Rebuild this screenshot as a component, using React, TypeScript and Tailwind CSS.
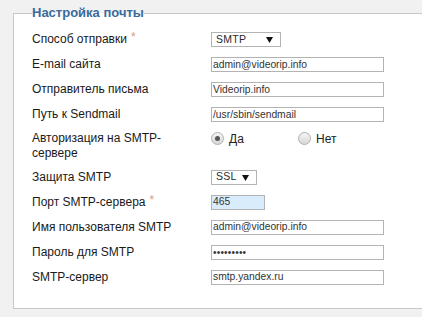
import React from "react";

const font = { fontFamily: '"Liberation Sans", Arial, sans-serif' };

function Tri() {
  return (
    <svg width="7" height="7" viewBox="0 0 7 7" className="shrink-0">
      <polygon points="0,1 7,1 3.5,7" fill="#111" />
    </svg>
  );
}

function Sel({ text, w }: { text: string; w: string }) {
  return (
    <div
      className={`${w} h-[15px] border border-[#b3b3b3] bg-white flex items-center justify-between pl-[4px] pr-[7px] text-[10.5px] text-[#2a2a2a] tracking-[0.3px]`}
    >
      <span>{text}</span>
      <Tri />
    </div>
  );
}

function Inp({ value, w = "w-[173px]", bg = "bg-white" }: { value: string; w?: string; bg?: string }) {
  return (
    <div
      className={`${w} h-[15px] border border-[#b3b3b3] ${bg} flex items-center pl-[1px] text-[10.3px] text-[#333] overflow-hidden whitespace-nowrap`}
    >
      {value}
    </div>
  );
}

function Star() {
  return <span className="text-[#dc9a80] ml-[4px] relative top-[-2px]">*</span>;
}

function Radio({ checked, label }: { checked?: boolean; label: string }) {
  return (
    <div className="flex items-center gap-[5px]">
      <div className="w-[13px] h-[13px] rounded-full border border-[#b0b0b0] bg-gradient-to-b from-[#f4f4f4] to-[#d8d8d8] flex items-center justify-center">
        {checked && <div className="w-[5px] h-[5px] rounded-full bg-[#555]" />}
      </div>
      <span className="text-[12px] text-[#222]">{label}</span>
    </div>
  );
}

function Row({ label, children, h = "h-[25px]" }: { label: React.ReactNode; children: React.ReactNode; h?: string }) {
  return (
    <div className={`grid grid-cols-[179px_1fr] ${h} items-center`}>
      <div className="text-[12px] text-[#1a1a1a] leading-[15px]">{label}</div>
      <div className="flex items-center">{children}</div>
    </div>
  );
}

export default function App() {
  return (
    <div className="w-[422px] h-[317px] bg-[#f1f1f1] overflow-hidden pl-[13px] pt-[5px]" style={font}>
      <fieldset className="w-[440px] h-[304px] border border-[#c8c8c8] bg-white pl-[18px] pt-[6px]">
        <legend className="px-0 text-[13px] leading-[16px] font-bold text-[#3a6b9c]">Настройка почты</legend>
        <Row label={<>Способ отправки<Star /></>}>
          <Sel text="SMTP" w="w-[70px]" />
        </Row>
        <Row label="E-mail сайта">
          <Inp value="admin@videorip.info" />
        </Row>
        <Row label="Отправитель письма">
          <Inp value="Videorip.info" />
        </Row>
        <Row label="Путь к Sendmail">
          <Inp value="/usr/sbin/sendmail" />
        </Row>
        <div className="grid grid-cols-[179px_1fr] h-[37.5px] items-start pt-[4px]">
          <div className="text-[12px] text-[#1a1a1a] leading-[15px]">
            Авторизация на SMTP-
            <br />
            сервере
          </div>
          <div className="flex items-center h-[15px]">
            <div className="w-[87px]">
              <Radio checked label="Да" />
            </div>
            <Radio label="Нет" />
          </div>
        </div>
        <Row label="Защита SMTP">
          <Sel text="SSL" w="w-[46px]" />
        </Row>
        <Row label={<>Порт SMTP-сервера<Star /></>}>
          <Inp value="465" w="w-[54px]" bg="bg-[#d9ecfb]" />
        </Row>
        <Row label="Имя пользователя SMTP">
          <Inp value="admin@videorip.info" />
        </Row>
        <Row label="Пароль для SMTP">
          <div className="w-[173px] h-[15px] border border-[#b3b3b3] bg-white flex items-center pl-[1px] text-[10px] text-[#333] tracking-[0.2px]">
            •••••••••
          </div>
        </Row>
        <Row label="SMTP-сервер">
          <Inp value="smtp.yandex.ru" />
        </Row>
      </fieldset>
    </div>
  );
}
